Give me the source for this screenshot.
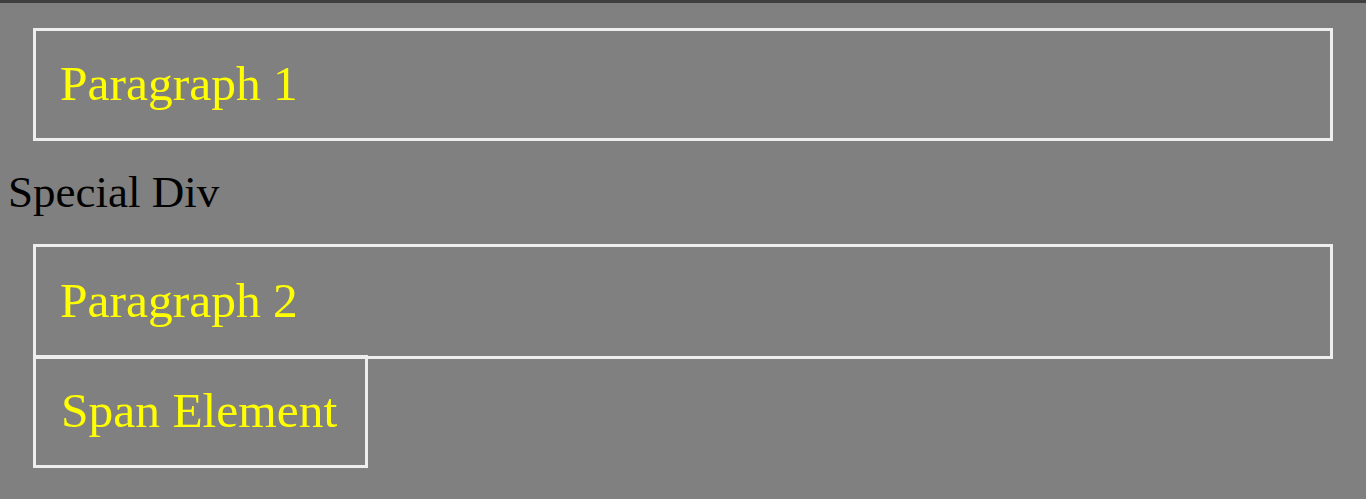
export default function App() {
    return (
        <div className="min-h-screen bg-[#808080] font-['Liberation_Serif',serif] leading-[54px]">
            <div className="h-[3px] bg-[#3f3f3f]" />

            <p className="mx-[33px] mt-[25px] border-[3px] border-[#eeeeee] pl-[24px] pt-[26px] pb-[27px] text-[49.5px] text-[#ffff00]">
                Paragraph 1
            </p>

            <div className="pl-[8px] pt-[24px] pb-[25px] text-[45px] text-black">Special Div</div>

            <p className="mx-[33px] border-[3px] border-[#eeeeee] pl-[24px] pt-[27px] pb-[28px] text-[49.5px] text-[#ffff00]">
                Paragraph 2
            </p>

            <span className="ml-[33px] -mt-[4px] block w-[335px] border-[3px] border-[#eeeeee] pl-[25px] pt-[26px] pb-[27px] text-[49.5px] text-[#ffff00]">
                Span Element
            </span>
        </div>
    );
}
